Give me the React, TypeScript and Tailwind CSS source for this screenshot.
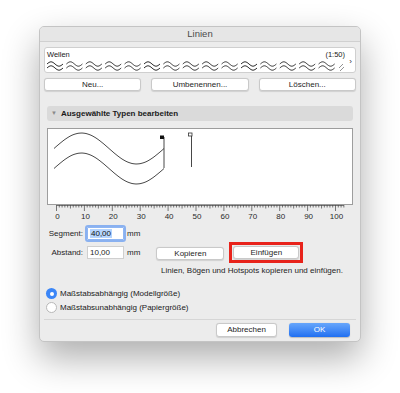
const font = { fontFamily: '"Liberation Sans", Arial, sans-serif' }

function WaveStrip() {
  // repeated double-wave pattern of the line type
  const reps = 15
  const step = 19.4
  const paths: string[] = []
  for (let i = 0; i < reps; i++) {
    const x0 = 1 + i * step
    for (const off of [0, 4]) {
      let d = ''
      for (let k = 0; k <= 16; k++) {
        const x = x0 + k
        const y = 5 + off - Math.sin((k / 16) * Math.PI * 2) * 2.2
        d += (k === 0 ? 'M' : 'L') + x.toFixed(2) + ',' + y.toFixed(2) + ' '
      }
      paths.push(d)
    }
  }
  return (
    <svg width="300" height="14" viewBox="0 0 300 14" className="block">
      {paths.map((d, i) => (
        <path key={i} d={d} fill="none" stroke="#2e2e2e" strokeWidth="1" />
      ))}
      <path d="M293,9 L297,5 M294,12 L298,8" stroke="#777" strokeWidth="0.8" />
    </svg>
  )
}

function Ruler() {
  const x0 = 9.5
  const s = 2.79
  const ticks = []
  for (let i = 0; i <= 103; i++) {
    const len = i % 10 === 0 ? 6 : i % 5 === 0 ? 3.5 : 2.5
    const x = x0 + i * s
    ticks.push(<line key={i} x1={x} y1={0} x2={x} y2={len} stroke="#444" strokeWidth="0.7" />)
  }
  const labels = []
  for (let i = 0; i <= 100; i += 10) {
    labels.push(
      <text key={i} x={x0 + i * s + 1} y={14} fontSize="8" fill="#2a2a2a" textAnchor="middle" fontFamily="Liberation Sans, Arial, sans-serif">
        {i}
      </text>
    )
  }
  return (
    <svg width="305" height="16" viewBox="0 0 305 16" className="block">
      <line x1={x0} y1={0.5} x2={x0 + 103 * s} y2={0.5} stroke="#444" strokeWidth="0.7" />
      {ticks}
      {labels}
    </svg>
  )
}

function Preview() {
  const curve = (dy: number) => {
    let d = ''
    for (let k = 0; k <= 110; k += 2) {
      const x = 6 + k
      const y = 19.5 + dy - Math.sin((k / 110) * Math.PI * 2) * 15.5
      d += (k === 0 ? 'M' : 'L') + x.toFixed(1) + ',' + y.toFixed(1) + ' '
    }
    return d
  }
  return (
    <svg width="303" height="74" viewBox="0 0 303 74" className="block">
      <path d={curve(0)} fill="none" stroke="#333" strokeWidth="0.9" />
      <path d={curve(20)} fill="none" stroke="#333" strokeWidth="0.9" />
      <line x1="116" y1="8" x2="116" y2="39" stroke="#333" strokeWidth="0.9" />
      <rect x="112" y="6.5" width="4" height="3.5" fill="#111" />
      <line x1="143.5" y1="4" x2="143.5" y2="38" stroke="#333" strokeWidth="0.9" />
      <rect x="140.5" y="4" width="3.5" height="3" fill="#fff" stroke="#333" strokeWidth="0.8" />
    </svg>
  )
}

function Btn({ children, className = '' }: { children: React.ReactNode; className?: string }) {
  return (
    <div className={`h-[13px] bg-white border border-[#c9c9c9] rounded-[3px] shadow-[0_0.5px_1px_rgba(0,0,0,0.12)] flex items-center justify-center text-[8px] leading-none text-[#1e1e1e] ${className}`}>
      {children}
    </div>
  )
}

export default function App() {
  return (
    <div className="w-[400px] h-[393px] bg-white overflow-hidden" style={font}>
      <div className="pt-[26px] pl-[39px]">
        <div className="w-[322px] h-[316px] bg-[#ececec] border border-[#c4c4c4] rounded-[5px] shadow-[0_16px_36px_rgba(0,0,0,0.32)] overflow-hidden flex flex-col">
          {/* title bar */}
          <div className="h-[15px] shrink-0 bg-[#e6e6e6] border-b border-[#d0d0d0] flex items-center justify-center text-[9.5px] text-[#4a4a4a]">
            Linien
          </div>

          <div className="px-[4px] flex flex-col">
            {/* line type list */}
            <div className="mt-[5px] h-[26px] bg-white border border-[#cfcfcf] rounded-[3px] relative">
              <div className="flex justify-between px-[2px] pt-[2px] text-[7.5px] leading-[9px] text-[#1a1a1a]">
                <span>Wellen</span>
                <span className="mr-[8px]">(1:50)</span>
              </div>
              <div className="pl-[1px]">
                <WaveStrip />
              </div>
              <span className="absolute right-[3px] top-[8px] text-[8px] text-[#333]">›</span>
            </div>

            {/* buttons */}
            <div className="mt-[5px] flex gap-[10px]">
              <Btn className="flex-1">Neu...</Btn>
              <Btn className="flex-1">Umbenennen...</Btn>
              <Btn className="flex-1">Löschen...</Btn>
            </div>

            {/* edit section */}
            <div className="px-[3px]">
              <div className="mt-[15px] h-[15px] bg-[#dadada] rounded-[3px] flex items-center pl-[4px] gap-[4px]">
                <span className="text-[6px] text-[#8a8a8a]">▼</span>
                <span className="text-[8px] font-bold text-[#1a1a1a]">Ausgewählte Typen bearbeiten</span>
              </div>

              <div className="mt-[7px] h-[77px] bg-white border border-[#9d9d9d]">
                <Preview />
              </div>
              <Ruler />
            </div>

            {/* segment / abstand */}
            <div className="mt-[6px] h-[13px] flex items-center">
              <span className="w-[39px] text-right text-[8px] leading-none text-[#1e1e1e]">Segment:</span>
              <div className="ml-[4px] w-[37px] h-[13px] bg-white border border-[#8fb6f3] outline-[2px] outline-[#8ab1f0] rounded-[1px] flex items-center pl-[2px]">
                <span className="text-[8px] text-[#111] bg-[#b5d4fd] px-[1px] leading-[9px]">40,00</span>
              </div>
              <span className="ml-[3px] text-[8px] leading-none text-[#1e1e1e]">mm</span>
            </div>

            <div className="mt-[2px] h-[21px] flex items-start">
              <div className="mt-[4px] h-[13px] flex items-center">
                <span className="w-[39px] text-right text-[8px] leading-none text-[#1e1e1e]">Abstand:</span>
                <div className="ml-[4px] w-[37px] h-[13px] bg-white border border-[#cfcfcf] flex items-center pl-[2px]">
                  <span className="text-[8px] leading-none text-[#1e1e1e]">10,00</span>
                </div>
                <span className="ml-[3px] text-[8px] leading-none text-[#1e1e1e]">mm</span>
              </div>
              <div className="ml-[16px] flex items-start">
                <Btn className="w-[68px] mt-[5px]">Kopieren</Btn>
                <div className="ml-[5px] border-[3px] border-[#e8231b] p-[1px]">
                  <Btn className="w-[66px]">Einfügen</Btn>
                </div>
              </div>
            </div>
            <div className="mt-[3px] h-[10px] pl-[117px] text-[8px] leading-[10px] text-[#1e1e1e] whitespace-nowrap">
              Linien, Bögen und Hotspots kopieren und einfügen.
            </div>

            {/* radios */}
            <div className="mt-[12px] flex flex-col gap-[3px] pl-[2px]">
              <div className="h-[11px] flex items-center gap-[3px]">
                <span className="w-[11px] h-[11px] rounded-full bg-[#3b86f7] flex items-center justify-center">
                  <span className="w-[4px] h-[4px] rounded-full bg-white" />
                </span>
                <span className="text-[8px] leading-none text-[#1a1a1a]">Maßstabsabhängig (Modellgröße)</span>
              </div>
              <div className="h-[11px] flex items-center gap-[3px]">
                <span className="w-[11px] h-[11px] rounded-full bg-white border border-[#b8b8b8]" />
                <span className="text-[8px] leading-none text-[#1a1a1a]">Maßstabsunabhängig (Papiergröße)</span>
              </div>
            </div>

            {/* footer */}
            <div className="mt-[6px] border-t border-[#d6d6d6] pt-[3px] flex justify-end gap-[12px] pr-[6px]">
              <Btn className="w-[61px] h-[14px]">Abbrechen</Btn>
              <div className="w-[61px] h-[14px] rounded-[3px] bg-gradient-to-b from-[#67a6fb] to-[#1f6ff1] flex items-center justify-center text-[8px] leading-none text-white shadow-[0_0.5px_1px_rgba(0,0,0,0.2)]">
                OK
              </div>
            </div>
          </div>
        </div>
      </div>
    </div>
  )
}
